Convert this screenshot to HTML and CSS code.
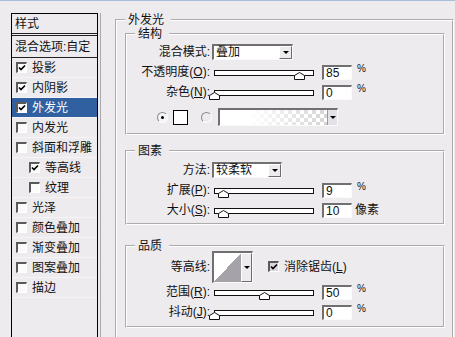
FILE: index.html
```html
<!DOCTYPE html>
<html lang="zh-CN">

<head>
    <meta charset="UTF-8">
    <meta name="viewport" content="width=device-width, initial-scale=1.0">
    <title>图层样式 - 外发光</title>
    <link rel="stylesheet" href="styles.css">
</head>

<body>
    <div class="dialog">
        <!-- 左侧样式列表 -->
        <div class="styles-list">
            <div class="list-head">样式</div>
            <div class="list-blend">混合选项:自定</div>
            <ul class="fx">
                <li><span class="cb on"><svg viewBox="0 0 8 8"><path d="M1 3.5 L3 5.5 L7 1.5"/></svg></span>投影</li>
                <li><span class="cb on"><svg viewBox="0 0 8 8"><path d="M1 3.5 L3 5.5 L7 1.5"/></svg></span>内阴影</li>
                <li class="sel"><span class="cb on"><svg viewBox="0 0 8 8"><path d="M1 3.5 L3 5.5 L7 1.5"/></svg></span>外发光</li>
                <li><span class="cb"></span>内发光</li>
                <li><span class="cb"></span>斜面和浮雕</li>
                <li class="sub"><span class="cb on"><svg viewBox="0 0 8 8"><path d="M1 3.5 L3 5.5 L7 1.5"/></svg></span>等高线</li>
                <li class="sub"><span class="cb"></span>纹理</li>
                <li><span class="cb"></span>光泽</li>
                <li><span class="cb"></span>颜色叠加</li>
                <li><span class="cb"></span>渐变叠加</li>
                <li><span class="cb"></span>图案叠加</li>
                <li><span class="cb"></span>描边</li>
            </ul>
        </div>

        <!-- 右侧：外发光设置 -->
        <fieldset class="group outer">
            <legend>外发光</legend>

            <fieldset class="group inner struct">
                <legend>结构</legend>
                <div class="row">
                    <label class="lbl">混合模式:</label>
                    <div class="select blend"><span>叠加</span><i class="btn"></i></div>
                </div>
                <div class="row">
                    <label class="lbl">不透明度(<u>O</u>):</label>
                    <div class="slider"><svg class="thumb" style="left:79px" viewBox="0 0 11 8"><polygon points="0.5,3.5 5.5,0.5 10.5,3.5 10.5,7.5 0.5,7.5"/></svg></div>
                    <div class="num">85</div><span class="unit">%</span>
                </div>
                <div class="row">
                    <label class="lbl">杂色(<u>N</u>):</label>
                    <div class="slider"><svg class="thumb" style="left:-6px" viewBox="0 0 11 8"><polygon points="0.5,3.5 5.5,0.5 10.5,3.5 10.5,7.5 0.5,7.5"/></svg></div>
                    <div class="num">0</div><span class="unit">%</span>
                </div>
                <div class="row pick">
                    <span class="radio on"></span>
                    <span class="swatch"></span>
                    <span class="radio second"></span>
                    <div class="gradient"><i class="btn"></i></div>
                </div>
            </fieldset>

            <fieldset class="group inner elements">
                <legend>图素</legend>
                <div class="row">
                    <label class="lbl">方法:</label>
                    <div class="select method"><span>较柔软</span><i class="btn"></i></div>
                </div>
                <div class="row">
                    <label class="lbl">扩展(<u>P</u>):</label>
                    <div class="slider"><svg class="thumb" style="left:3px" viewBox="0 0 11 8"><polygon points="0.5,3.5 5.5,0.5 10.5,3.5 10.5,7.5 0.5,7.5"/></svg></div>
                    <div class="num">9</div><span class="unit">%</span>
                </div>
                <div class="row">
                    <label class="lbl">大小(<u>S</u>):</label>
                    <div class="slider"><svg class="thumb" style="left:3px" viewBox="0 0 11 8"><polygon points="0.5,3.5 5.5,0.5 10.5,3.5 10.5,7.5 0.5,7.5"/></svg></div>
                    <div class="num">10</div><span class="unit px">像素</span>
                </div>
            </fieldset>

            <fieldset class="group inner quality">
                <legend>品质</legend>
                <div class="row contour-row">
                    <label class="lbl">等高线:</label>
                    <div class="contour"><span class="curve"></span><i class="btn"></i></div>
                    <span class="cb grey on"><svg viewBox="0 0 8 8"><path d="M1 3.5 L3 5.5 L7 1.5"/></svg></span>
                    <span class="aa">消除锯齿(<u>L</u>)</span>
                </div>
                <div class="row">
                    <label class="lbl">范围(<u>R</u>):</label>
                    <div class="slider"><svg class="thumb" style="left:44px" viewBox="0 0 11 8"><polygon points="0.5,3.5 5.5,0.5 10.5,3.5 10.5,7.5 0.5,7.5"/></svg></div>
                    <div class="num">50</div><span class="unit">%</span>
                </div>
                <div class="row">
                    <label class="lbl">抖动(<u>J</u>):</label>
                    <div class="slider"><svg class="thumb" style="left:-6px" viewBox="0 0 11 8"><polygon points="0.5,3.5 5.5,0.5 10.5,3.5 10.5,7.5 0.5,7.5"/></svg></div>
                    <div class="num">0</div><span class="unit">%</span>
                </div>
            </fieldset>
        </fieldset>
    </div>
</body>

</html>
```

FILE: styles.css
```css
* {
    margin: 0;
    padding: 0;
    box-sizing: border-box;
}

body {
    width: 455px;
    height: 337px;
    overflow: hidden;
    background-color: #eeebef;
    border-top: 1px solid #a8bddb;
    font: 12px/14px "Liberation Sans", "Noto Sans CJK SC", sans-serif;
    color: #111;
}

u {
    text-decoration: underline;
}

.dialog {
    display: flex;
    align-items: flex-start;
    height: 336px;
    overflow: hidden;
    padding-top: 12px;
}

/* 左侧列表 */
.styles-list {
    flex-shrink: 0;
    width: 87px;
    height: 340px;
    margin-left: 11px;
    border: 1px solid #000;
    box-shadow: 2px 0 0 #eeebef, 3px 0 0 #a9a8ac;
}

.list-head {
    height: 22px;
    padding: 3px 0 0 3px;
    border-bottom: 3px double #222;
}

.list-blend {
    height: 22px;
    padding: 4px 0 0 3px;
    border-bottom: 1px solid #222;
}

.fx li {
    list-style: none;
    display: flex;
    align-items: center;
    height: 20px;
    padding-left: 4px;
    border-bottom: 1px solid #f6f4f7;
}

.fx li.sub {
    padding-left: 17px;
}

.fx li.sel {
    background-color: #30609f;
    color: #fff;
}

.cb {
    display: flex;
    align-items: center;
    justify-content: center;
    flex-shrink: 0;
    width: 11px;
    height: 11px;
    margin-right: 5px;
    border-style: solid;
    border-width: 2px 1px 1px 2px;
    border-color: #5a5a5a #fff #fff #5a5a5a;
    background-color: #fbfbfb;
}

.cb svg {
    width: 8px;
    height: 8px;
    fill: none;
    stroke: #000;
    stroke-width: 1.6;
}

.cb.grey {
    margin-left: 15px;
    background-color: #d9d7db;
}

/* 分组框 */
.group {
    min-width: 0;
    border: 2px groove #fff;
}

.group legend {
    line-height: 14px;
    padding: 0 7px 0 3px;
}

.outer {
    width: 339px;
    margin-left: 17px;
    padding: 0 7px 40px 8px;
}

.inner {
    width: 320px;
    padding: 0;
}

.inner legend {
    margin-left: 8px;
}

.struct {
    padding: 1px 0 6px;
}

.elements {
    margin-top: 9px;
    padding: 2px 0 3px;
}

.quality {
    margin-top: 14px;
    padding: 0 0 4px;
}

.row {
    display: flex;
    align-items: center;
    height: 20px;
}

.lbl {
    flex-shrink: 0;
    width: 83px;
    text-align: right;
}

/* 凹陷控件 */
.select,
.num,
.gradient,
.contour {
    border-style: solid;
    border-width: 2px 1px 1px 2px;
    border-color: #707070 #fafafa #fafafa #707070;
    background-color: #fff;
}

.select {
    display: flex;
    height: 16px;
    margin-left: 2px;
}

.select span {
    flex: 1;
    padding-left: 2px;
    line-height: 12px;
}

.blend {
    width: 81px;
}

.method {
    width: 70px;
}

.btn {
    display: flex;
    align-items: center;
    justify-content: center;
    width: 13px;
    border: 1px solid;
    border-color: #fff #6d6d6d #6d6d6d #fff;
    background-color: #eeebef;
}

.btn::after {
    content: '';
    border-left: 3px solid transparent;
    border-right: 3px solid transparent;
    border-top: 3px solid #000;
}

.slider {
    position: relative;
    width: 100px;
    height: 6px;
    margin: 2px 0 0 4px;
    border: 1px solid #111;
    background-color: #fff;
}

.thumb {
    position: absolute;
    top: 1px;
    width: 11px;
    height: 8px;
    fill: #fff;
    stroke: #111;
    stroke-width: 1;
}

.num {
    width: 30px;
    height: 15px;
    margin-left: 8px;
    padding-left: 2px;
    line-height: 12px;
}

.unit {
    margin-left: 5px;
    font-size: 10px;
    line-height: 10px;
    align-self: flex-start;
    margin-top: 2px;
}

.unit.px {
    margin-left: 3px;
    font-size: 12px;
    line-height: 14px;
    margin-top: 3px;
}

/* 颜色 / 渐变选择 */
.pick {
    margin-top: 5px;
    padding-left: 30px;
}

.radio {
    position: relative;
    width: 11px;
    height: 11px;
    border-radius: 50%;
    border: 1px solid;
    border-color: #8a8a8a #fdfdfd #fdfdfd #8a8a8a;
    background-color: #f5f4f6;
}

.radio.on::after {
    content: '';
    position: absolute;
    top: 3px;
    left: 3px;
    width: 3px;
    height: 3px;
    border-radius: 50%;
    background-color: #000;
}

.radio.second {
    margin-left: 13px;
    background-color: #eeebef;
}

.swatch {
    width: 15px;
    height: 15px;
    margin-left: 5px;
    border: 1px solid #000;
    background-color: #fff;
}

.gradient {
    display: flex;
    justify-content: flex-end;
    width: 120px;
    height: 18px;
    margin-left: 6px;
    background:
        linear-gradient(to right, #fff 25%, rgba(255, 255, 255, 0) 100%),
        repeating-conic-gradient(#cfcfcf 0 25%, #fff 0 50%) 0 0 / 8px 8px;
}

.gradient .btn {
    width: 10px;
    border: 0;
    border-left: 1px solid #9a9a9a;
    background-color: #e4e2e6;
}

/* 等高线 */
.contour-row {
    height: 31px;
    margin-top: -2px;
}

.contour {
    display: flex;
    width: 41px;
    height: 32px;
    margin-left: 2px;
}

.curve {
    flex: 1;
    background: linear-gradient(to top left, #a5a3a9 50%, #fff 50%);
}

.contour .btn {
    width: 11px;
}

.aa {
    white-space: nowrap;
}
```
